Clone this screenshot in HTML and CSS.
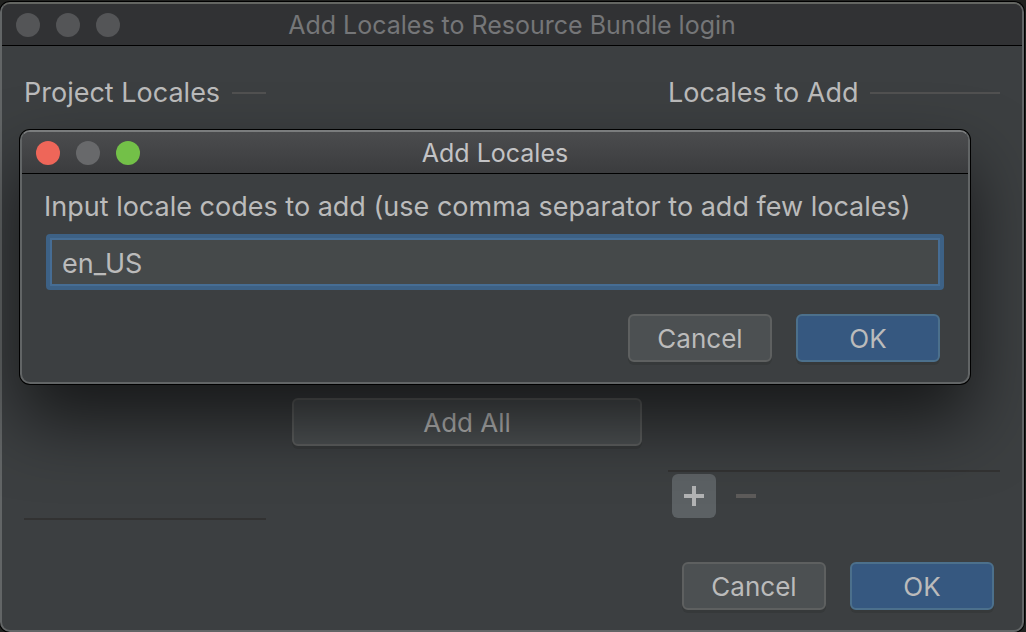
FILE: index.html
```html
<!DOCTYPE html>
<html lang="en">
<head>
<meta charset="utf-8">
<title>Add Locales to Resource Bundle login</title>
<link rel="stylesheet" href="styles.css">
</head>
<body>
<main class="window window-main">
  <header class="titlebar titlebar-inactive">
    <div class="lights"><span class="light"></span><span class="light"></span><span class="light"></span></div>
    <h1 class="title">Add Locales to Resource Bundle login</h1>
  </header>
  <div class="columns">
    <section class="column">
      <h2 class="group-title">Project Locales</h2>
      <div class="list"></div>
    </section>
    <div class="column column-actions">
      <button class="button button-wide" type="button">Add All</button>
    </div>
    <section class="column">
      <h2 class="group-title">Locales to Add</h2>
      <div class="list"></div>
      <div class="toolbar">
        <button class="tool tool-active" type="button" aria-label="Add">
          <svg width="20" height="20" viewBox="0 0 20 20"><path d="M8 0h4v8h8v4h-8v8H8v-8H0V8h8z" fill="currentColor"/></svg>
        </button>
        <button class="tool" type="button" aria-label="Remove" disabled>
          <svg width="20" height="20" viewBox="0 0 20 20"><path d="M0 8h20v4H0z" fill="currentColor"/></svg>
        </button>
      </div>
    </section>
  </div>
  <footer class="footer">
    <button class="button" type="button">Cancel</button>
    <button class="button button-primary" type="button">OK</button>
  </footer>
</main>
<form class="window dialog" role="dialog" aria-labelledby="dialog-title">
  <header class="titlebar titlebar-active">
    <div class="lights"><span class="light light-close"></span><span class="light"></span><span class="light light-zoom"></span></div>
    <h2 class="title" id="dialog-title">Add Locales</h2>
  </header>
  <div class="dialog-body">
    <label class="label" for="codes">Input locale codes to add (use comma separator to add few locales)</label>
    <input class="field" id="codes" type="text" value="en_US">
    <div class="dialog-actions">
      <button class="button" type="button">Cancel</button>
      <button class="button button-primary" type="button">OK</button>
    </div>
  </div>
</form>
</body>
</html>
```
FILE: styles.css
```css
* { box-sizing: border-box; }

body {
  margin: 0;
  min-height: 100vh;
  padding: 2px 2px 0 0;
  display: flex;
  background: #20211f;
  color: #bbbbbb;
  font: 27px/32px Inter, "Liberation Sans", sans-serif;
}

h1, h2 { margin: 0; font: inherit; }

.window {
  display: flex;
  flex-direction: column;
  background: #3c3f41;
  border: 2px solid #626566;
  border-radius: 10px;
  box-shadow: 0 0 0 1px #000000;
}

.window-main {
  flex: 1;
  border-top-color: #646662;
}

.titlebar {
  display: grid;
  grid-template-columns: 1fr auto 1fr;
  align-items: center;
  height: 42px;
  padding: 0 14px;
  border-bottom: 1px solid #000000;
  border-radius: 8px 8px 0 0;
}

.titlebar-inactive { background: #313234; color: #757678; }
.titlebar-active { background: linear-gradient(#4b4c4e, #3b3c3e); color: #c3c3c5; }

.title { font-size: 25px; }

.lights { display: flex; gap: 16px; }

.light {
  width: 24px;
  height: 24px;
  border-radius: 50%;
  background: #545557;
}

.titlebar-active .light { background: #68696b; }
.titlebar-active .light-close { background: #ee6659; }
.titlebar-active .light-zoom { background: #73c048; }

.columns {
  flex: 1;
  display: grid;
  grid-template-columns: 242fr 350fr 332fr;
  gap: 26px;
  padding: 31px 22px 0;
}

.column { display: flex; flex-direction: column; }

.column-actions {
  justify-content: flex-end;
  padding-bottom: 74px;
}

.group-title {
  display: flex;
  align-items: center;
  gap: 12px;
  white-space: nowrap;
}

.group-title::after {
  content: "";
  flex: 1;
  height: 2px;
  background: #515151;
}

.list { flex: 1; border-bottom: 2px solid #323232; }

.toolbar {
  display: flex;
  gap: 8px;
  padding: 2px 4px;
}

.tool {
  display: grid;
  place-items: center;
  width: 44px;
  height: 44px;
  padding: 0;
  border: 0;
  border-radius: 6px;
  background: none;
  color: #5d5b5a;
}

.tool-active { background: #5c6164; color: #b2b3b4; }

.footer, .dialog-actions {
  display: flex;
  justify-content: flex-end;
  gap: 24px;
}

.footer { padding: 42px 28px 20px; }

.button {
  width: 144px;
  height: 48px;
  padding: 2px 0 0;
  border: 2px solid #5e6060;
  border-radius: 6px;
  background: #4c5052;
  color: #bbbbbb;
  font: inherit;
  font-size: 26px;
  box-shadow: 0 3px 0 #36393a;
}

.button-wide { width: 100%; }
.button-primary { background: #365880; border-color: #4c708c; }

.dialog {
  position: absolute;
  top: 130px;
  left: 20px;
  right: 56px;
  border-top-color: #7b7d7e;
  box-shadow: 0 0 0 1px #000000, 0 36px 70px rgba(0, 0, 0, 0.62);
}

.dialog-body {
  display: flex;
  flex-direction: column;
  padding: 17px 28px 20px 22px;
}

.label { white-space: nowrap; }

.field {
  height: 56px;
  margin: 11px -4px 24px 2px;
  padding: 2px 12px 0;
  border: 4px solid #3d6185;
  border-radius: 4px;
  outline: 0;
  background: #45494a;
  box-shadow: inset 0 0 0 2px #466d94;
  color: #bbbbbb;
  font: inherit;
}
```
